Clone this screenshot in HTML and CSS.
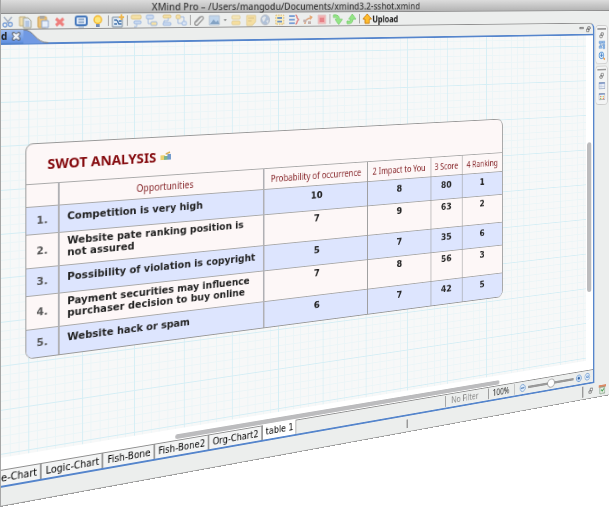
FILE: index.html
```html
<!DOCTYPE html>
<html lang="en">
<head>
  <meta charset="UTF-8">
  <title>XMind Pro</title>
  <link rel="stylesheet" href="styles.css">
</head>
<body>

<div class="stage">
<div class="window">
  <header class="titlebar">XMind Pro – /Users/mangodu/Documents/xmind3.2-sshot.xmind</header>

  <div class="toolbar">
    <div class="group loose">
      <button aria-label="Cut"><svg viewBox="0 0 14 14"><path d="M3 2l5 6M11 2L6 8" stroke="#a9b4c4" stroke-width="1.5"/><circle cx="4" cy="10" r="2" fill="none" stroke="#7fa3d8" stroke-width="1.3"/><circle cx="9.500" cy="9.500" r="2" fill="none" stroke="#7fa3d8" stroke-width="1.3"/></svg></button>
      <button aria-label="Copy"><svg viewBox="0 0 14 14"><path d="M1 2h6v9H1z" fill="#f1dfae" stroke="#c3b284"/><path d="M5 3h5l3 3v7H5z" fill="#dce6f4" stroke="#a9a78e"/><path d="M7 7h4M7 9h4M7 11h4" stroke="#8ba6d0"/></svg></button>
      <button aria-label="Paste"><svg viewBox="0 0 14 14"><rect x="2" y="2" width="9" height="11" rx="1" fill="#ecc277" stroke="#c99f59"/><rect x="4" y="1" width="5" height="3" fill="#aaa9a5"/><path d="M6 6h7v7H6z" fill="#e6eefa" stroke="#8ea5cc"/></svg></button>
      <button aria-label="Delete"><svg viewBox="0 0 14 14"><path d="M3 4l8 7M11 4l-8 7" stroke="#ee7f7c" stroke-width="3"/></svg></button>
    </div>
    <div class="group loose view">
      <button aria-label="Presentation"><svg viewBox="0 0 14 14"><rect x="1" y="2" width="12" height="9" rx="2" fill="#dfeaf8" stroke="#4477bb" stroke-width="2"/><path d="M4 5h6M4 8h6" stroke="#5579a6"/><path d="M4 13h6" stroke="#8fa6c4"/></svg></button>
      <button aria-label="Brainstorm"><svg viewBox="0 0 14 14"><circle cx="7" cy="5.500" r="4" fill="#ffe77a" stroke="#f3b62e" stroke-width="1.500"/><path d="M5 10h4v3H5z" fill="#728bb5"/></svg></button>
    </div>
    <i class="sep"></i>
    <div class="group">
      <button aria-label="New sheet"><svg viewBox="0 0 14 14"><path d="M1 3h11v10H1z" fill="#e2edf7" stroke="#7a8c9e"/><path d="M3 6h3M8 7h3M3 10h3M6 6l2 4h3" stroke="#3e6ea8" fill="none" stroke-width="1.500"/><path d="M11 0v6M8 3h6" stroke="#edb64e" stroke-width="2"/></svg></button>
    </div>
    <i class="sep"></i>
    <div class="group faded">
      <button aria-label="Topic"><svg viewBox="0 0 14 14"><rect x="1" y="1" width="11" height="4" rx="1" fill="#f7df9a" stroke="#dcc079"/><rect x="4" y="7" width="8" height="3" rx="1" fill="#c7d9f4" stroke="#92b0de"/><path d="M7 10v3h-3" fill="none" stroke="#92b0de"/></svg></button>
      <button aria-label="Subtopic"><svg viewBox="0 0 14 14"><rect x="1" y="1" width="8" height="4" rx="1" fill="#c7d9f4" stroke="#92b0de"/><rect x="6" y="8" width="7" height="4" rx="1" fill="#f7df9a" stroke="#92b0de"/><path d="M3 5v5h3" fill="none" stroke="#92b0de"/></svg></button>
      <button aria-label="Topic before"><svg viewBox="0 0 14 14"><rect x="3" y="1" width="9" height="3" rx="1" fill="#f7df9a" stroke="#dcc079"/><rect x="3" y="9" width="9" height="3" rx="1" fill="#c7d9f4" stroke="#92b0de"/><path d="M9 4v3H4v2" fill="none" stroke="#92b0de"/></svg></button>
      <button aria-label="Parent topic"><svg viewBox="0 0 14 14"><rect x="1" y="1" width="5" height="4" rx="1" fill="#f7df9a" stroke="#dcc079"/><rect x="8" y="8" width="5" height="4" rx="1" fill="#dbe6f7" stroke="#92b0de"/><path d="M3 5v5h5M6 3h4v5" fill="none" stroke="#92b0de"/></svg></button>
    </div>
    <i class="sep"></i>
    <div class="group loose faded">
      <button aria-label="Attachment"><svg viewBox="0 0 14 14"><path d="M3 9l6-6q3-1 3 2l-7 7q-4 1-3-3l6-6" fill="none" stroke="#8c8c8c" stroke-width="1.500"/></svg></button>
      <button aria-label="Image"><svg viewBox="0 0 14 14"><path d="M1 2h12v10H1z" fill="#b9d2ee" stroke="#a9b8ca"/><path d="M2 11l4-5 3 3 2-2 2 4z" fill="#7296bd"/></svg></button>
      <span class="caret"></span>
      <button aria-label="Label"><svg viewBox="0 0 14 14"><rect x="2" y="2" width="10" height="4" rx="1" fill="#f6e5b0" stroke="#e0cb8d"/><rect x="2" y="8" width="10" height="4" rx="1" fill="#f8dc91" stroke="#e0cb8d"/></svg></button>
      <button aria-label="Notes"><svg viewBox="0 0 14 14"><path d="M2 2h11v7l-4 4H2z" fill="#f6dc96" stroke="#dfc684"/><path d="M4 5h7M4 8h4" stroke="#d4ba76"/></svg></button>
      <button aria-label="Hyperlink"><svg viewBox="0 0 14 14"><circle cx="7" cy="7" r="5.500" fill="#a7bbd6" stroke="#b3b6bc"/><path d="M3 5q3-3 5-1l-2 4-2 1zM8 8l3-1-1 4z" fill="#e3e7eb"/></svg></button>
      <button aria-label="Boundary"><svg viewBox="0 0 14 14"><path d="M2 2h10v10H2z" fill="#fdeeb8" stroke="#d9a94a" stroke-dasharray="2 1"/><path d="M4 4h6v2H4zM4 8h6v2H4z" fill="#5480c0"/></svg></button>
      <button aria-label="Summary"><svg viewBox="0 0 14 14"><path d="M1 3h7M1 7h7M1 11h7" stroke="#6791d1" stroke-width="2"/><path d="M9 2q2 0 2 3l2 2-2 2q0 3-2 3" fill="none" stroke="#db6668" stroke-width="1.500"/></svg></button>
      <button aria-label="Relationship"><svg viewBox="0 0 14 14"><path d="M3 12q0-6 8-7" fill="none" stroke="#d98a55" stroke-width="1.500"/><path d="M9 2l4 2-3 4z" fill="#e39b5c"/><path d="M1 7h4v3H1zM7 9h4v3H7z" fill="#bda6a2"/></svg></button>
      <button aria-label="Marker"><svg viewBox="0 0 14 14"><path d="M2 2h10v10H2z" fill="#f3a9a9" stroke="#e3c3c3"/><path d="M4 5h6v5H4z" fill="#e57077"/></svg></button>
    </div>
    <i class="sep"></i>
    <div class="group loose">
      <button aria-label="Drill down"><svg viewBox="0 0 14 14"><path d="M1 2q8-1 8 5h4l-5 6-5-6h3q0-3-5-2z" fill="#93e685" stroke="#7fce75"/></svg></button>
      <button aria-label="Drill up"><svg viewBox="0 0 14 14"><path d="M1 12q8 1 8-5h4L8 1 3 7h3q0 3-5 2z" fill="#93e685" stroke="#7fce75"/></svg></button>
    </div>
    <i class="sep"></i>
    <button class="upload"><svg viewBox="0 0 14 14"><path d="M7 1l6 6h-3v5H4V7H1z" fill="#fdbb2c" stroke="#c77d13"/></svg>Upload</button>
  </div>

  <div class="workbench">
    <section class="editor">
      <div class="tabstrip">
        <div class="file-tab">
          <span>d</span>
          <button aria-label="Close"><svg viewBox="0 0 12 12"><path d="M1 1h3l2 2 2-2h3v3L9 6l2 2v3H8L6 9l-2 2H1V8l2-2-2-2z" fill="#eef3fa" stroke="#333"/></svg></button>
        </div>
        <svg class="curve" viewBox="0 0 30 14" preserveAspectRatio="none"><path d="M0 0C13 0 14 14 30 14H0z" fill="#7099e3"/><path d="M0 0C13 0 14 13.500 30 13.500" fill="none" stroke="#777"/></svg>
        <div class="strip-tools">
          <button aria-label="Minimize"><svg viewBox="0 0 8 8"><path d="M1 1.500h6v2H1z" fill="#fff" stroke="#555"/></svg></button>
          <button aria-label="Restore"><svg viewBox="0 0 8 8"><path d="M3 1h4v3H3zM1 4h4v3H1z" fill="#fff" stroke="#555"/></svg></button>
        </div>
      </div>

      <div class="canvas">
        <div class="paper">
          <div class="swot">
            <h1>SWOT ANALYSIS <svg viewBox="0 0 14 10"><path d="M1 4h5v5H1z" fill="#ecd070"/><path d="M5 5h4v4H5z" fill="#7fb38c"/><path d="M9 3h4v6H9z" fill="#729acb"/><path d="M7 3l5-2" stroke="#d8a94c" stroke-width="1.500"/></svg></h1>
            <table>
              <colgroup><col class="c-num"><col class="c-name"><col class="c-prob"><col class="c-impact"><col class="c-score"><col class="c-rank"></colgroup>
              <thead>
                <tr><th></th><th>Opportunities</th><th>Probability of occurrence</th><th>2 Impact to You</th><th>3 Score</th><th>4 Ranking</th></tr>
              </thead>
              <tbody>
                <tr><th>1.</th><td>Competition is very high</td><td>10</td><td>8</td><td>80</td><td>1</td></tr>
                <tr class="tall"><th>2.</th><td>Website pate ranking position is<br>not assured</td><td>7</td><td>9</td><td>63</td><td>2</td></tr>
                <tr><th>3.</th><td>Possibility of violation is copyright</td><td>5</td><td>7</td><td>35</td><td>6</td></tr>
                <tr class="tall"><th>4.</th><td>Payment securities may influence<br>purchaser decision to buy online</td><td>7</td><td>8</td><td>56</td><td>3</td></tr>
                <tr><th>5.</th><td>Website hack or spam</td><td>6</td><td>7</td><td>42</td><td>5</td></tr>
              </tbody>
            </table>
          </div>
        </div>
        <div class="vscroll"><div class="thumb"></div></div>
        <div class="hscroll"><div class="thumb"></div></div>
      </div>

      <div class="sheetbar">
        <nav class="sheets">
          <button>e-Chart</button>
          <button>Logic-Chart</button>
          <button>Fish-Bone</button>
          <button>Fish-Bone2</button>
          <button>Org-Chart2</button>
          <button class="active">table 1</button>
        </nav>
        <div class="sheet-status">
          <span class="filter">No Filter</span>
          <span class="percent">100%</span>
          <div class="zoom">
            <button aria-label="Zoom out"><svg viewBox="0 0 12 12"><circle cx="6" cy="6" r="4.500" fill="#e4effb" stroke="#5a8cc9"/><path d="M3 6h6" stroke="#3468ab" stroke-width="1.500"/></svg></button>
            <input type="range" min="0" max="100" value="49" aria-label="Zoom">
            <button aria-label="Zoom in"><svg viewBox="0 0 12 12"><circle cx="6" cy="6" r="4.500" fill="#d4e5f8" stroke="#5a8cc9"/><path d="M4 6h4M6 4v4" stroke="#2a5c9f" stroke-width="2"/></svg></button>
            <button aria-label="Fit"><svg viewBox="0 0 12 12"><circle cx="6" cy="6" r="4.500" fill="#e4effb" stroke="#5a8cc9"/><path d="M4 5h4v2H4z" fill="none" stroke="#5a8cc9"/></svg></button>
          </div>
        </div>
      </div>
    </section>

    <aside class="rail">
      <div class="rail-box">
        <i class="grip"></i>
        <button class="small" aria-label="Restore"><svg viewBox="0 0 8 8"><path d="M3 1h4v3H3zM1 4h4v3H1z" fill="#fff" stroke="#666"/></svg></button>
        <button aria-label="Outline"><svg viewBox="0 0 14 14"><path d="M1 1h6v3H1zM1 9h6v3H1zM8 1h5v3H8zM9 6h4v3H9zM9 10h4v3H9z" fill="#9dc3ee" stroke="#5f92cf"/><path d="M3 4v5M3 7h6" stroke="#3f78be"/></svg></button>
        <button aria-label="Overview"><svg viewBox="0 0 14 14"><circle cx="6" cy="6" r="5" fill="#d9eafa" stroke="#478bd2" stroke-width="1.500"/><path d="M6 3v6M3 6h6" stroke="#3f78be" stroke-width="1.500"/><path d="M10 10l3 3" stroke="#e58e35" stroke-width="2.500"/></svg></button>
      </div>
      <div class="rail-box">
        <i class="grip"></i>
        <button class="small" aria-label="Restore"><svg viewBox="0 0 8 8"><path d="M3 1h4v3H3zM1 4h4v3H1z" fill="#fff" stroke="#666"/></svg></button>
        <button aria-label="Properties"><svg viewBox="0 0 14 14"><path d="M1 2h12v10H1z" fill="#eef2fa" stroke="#7d8fae"/><path d="M1 3h12" stroke="#7590c4" stroke-width="2"/><path d="M5 4v8M1 8h12" stroke="#b8c4da"/></svg></button>
        <button aria-label="Markers"><svg viewBox="0 0 14 14"><path d="M1 2h12v10H1z" fill="#fff" stroke="#8a8fa0"/><path d="M1 3h12" stroke="#7590c4" stroke-width="2"/><path d="M3 6h2v2H3zM9 9h2v2H9z" fill="#dd5a3c"/><path d="M6 6h2v2H6zM3 9h2v2H3z" fill="#67b35c"/><path d="M9 6h2v2H9zM6 9h2v2H6z" fill="#eda93a"/></svg></button>
      </div>
    </aside>
  </div>

  <footer class="statusbar">
    <i class="notch"></i>
    <div class="tray">
      <button class="small" aria-label="Restore"><svg viewBox="0 0 8 8"><path d="M3 1h4v3H3zM1 4h4v3H1z" fill="#fff" stroke="#666"/></svg></button>
      <button aria-label="Task info"><svg viewBox="0 0 14 14"><path d="M1 2h12v3H1z" fill="#dc8a66"/><path d="M3 5h8v8H3z" fill="#eaf1e6" stroke="#7f9a82"/><path d="M5 8l2 2 3-3" fill="none" stroke="#3f9b4c" stroke-width="1.500"/></svg></button>
    </div>
  </footer>
</div>
</div>

</body>
</html>
```
FILE: styles.css
```css
* { box-sizing: border-box; }

body {
  margin: 0;
  background: #fff;
  font-family: "Noto Sans", "Open Sans", sans-serif;
  color: #222;
}

button {
  display: block;
  border: none;
  background: none;
  padding: 0;
  margin: 0;
  font: inherit;
  color: inherit;
}

button svg { display: block; width: 14px; height: 14px; }

.small svg { width: 8px; height: 8px; }

.stage {
  width: 100%;
  height: 100vh;
  overflow: hidden;
}

/* the whole app window, turned away from the viewer on its left edge */
.window {
  display: flex;
  flex-direction: column;
  width: 130.4vw;
  height: 100vh;
  background: #eceeed;
  border-left: 1px solid #a5a5a5;
  border-right: 1px solid #bbb;
  border-bottom: 1px solid #999;
  overflow: hidden;
  transform-origin: 0 0;
  transform: perspective(80vw) rotateY(10deg);
}

.titlebar {
  height: 14px;
  padding-left: 162px;
  background: linear-gradient(#dcdcdc, #b4b4b4);
  border-bottom: 1px solid #8c8c8c;
  font-size: 11px;
  font-weight: 500;
  line-height: 13px;
  white-space: nowrap;
  color: #3c3c3c;
}

/* toolbar */
.toolbar {
  display: flex;
  align-items: center;
  gap: 3px;
  height: 15px;
}

.group { display: flex; align-items: center; gap: 3px; }
.group.loose { gap: 4px; }
.group.view { margin: 0 1px 0 6px; }
.faded { opacity: 0.85; }
.toolbar .sep { width: 1px; height: 11px; background: #999; }
.caret {
  border: 2px solid transparent;
  border-top-color: #666;
  border-bottom: none;
}

.upload {
  display: flex;
  align-items: center;
  font-size: 10px;
  font-weight: bold;
  line-height: 14px;
}

/* editor */
.workbench { display: flex; flex: 1; min-height: 0; }

.editor {
  display: flex;
  flex-direction: column;
  flex: 1;
  min-width: 0;
  border-top: 1px solid #8f8f8f;
  border-right: 2px solid #5585cc;
  border-bottom: 2px solid #5585cc;
  border-radius: 0 8px 0 0;
}

.tabstrip {
  display: flex;
  height: 15px;
  border-bottom: 2px solid #5585cc;
}

.file-tab {
  display: flex;
  align-items: center;
  gap: 5px;
  padding-right: 3px;
  background: linear-gradient(#9fbef2, #5f8fe0);
  font-size: 10px;
  font-weight: bold;
  line-height: 13px;
}

.file-tab svg { width: 9px; height: 9px; }
.curve { width: 26px; height: 14px; }

.strip-tools {
  display: flex;
  align-items: center;
  gap: 3px;
  margin-left: auto;
  padding-right: 4px;
}

.strip-tools svg { width: 8px; height: 8px; }

.canvas {
  display: grid;
  flex: 1;
  min-height: 0;
  grid-template-columns: 1fr 12px;
  grid-template-rows: 1fr 12px;
  background: #fff;
}

.paper {
  padding: 100px 0 0 25px;
  background-color: #f7f8f8;
  background-image:
    linear-gradient(to right, #d5eef5 1px, transparent 1px),
    linear-gradient(#d5eef5 1px, transparent 1px),
    repeating-linear-gradient(to right, #ebf5f7 0 1px, transparent 1px 16.66%),
    repeating-linear-gradient(#ebf5f7 0 1px, transparent 1px 20%);
  background-size: 57px 44px;
  background-position: 28px 13px;
}

.vscroll { padding: 136px 3px 0 2px; }
.vscroll .thumb { height: 190px; }
.hscroll { padding: 6px 18% 0 25%; }
.hscroll .thumb { height: 5px; }
.thumb { border-radius: 4px; background: #bcbcbe; }

/* spreadsheet topic */
.swot {
  width: 82%;
  border: 1px solid #999;
  border-radius: 8px;
  background: #fdf7f7;
  overflow: hidden;
}

.swot h1 {
  display: flex;
  align-items: center;
  gap: 4px;
  height: 40px;
  margin: 0;
  padding-left: 22px;
  font-size: 15px;
  font-weight: bold;
  color: #84090d;
}

.swot h1 svg { width: 14px; height: 10px; }

table {
  width: 100%;
  table-layout: fixed;
  border-collapse: collapse;
  font-family: "DejaVu Sans", sans-serif;
  font-size: 11px;
}

.c-num { width: 34px; }
.c-name { width: 235px; }
.c-prob { width: 134px; }
.c-impact { width: 88px; }
.c-score { width: 45px; }

thead tr { height: 23px; }
tbody tr { height: 28px; }
tbody .tall { height: 34px; }
tbody tr:nth-child(odd) { background: #dde5fe; }

th, td {
  padding: 0;
  border-top: 1px solid #aaa;
  border-left: 1px solid #999;
  white-space: nowrap;
}

th:first-child { border-left: none; }
th:nth-child(2), td:nth-child(2),
th:nth-child(3), td:nth-child(3) {
  border-left: 2px solid #b0b0b4;
}

thead th {
  font-family: "Noto Sans", sans-serif;
  font-size: 10px;
  font-weight: normal;
  color: #86262a;
}

tbody th { color: #555; }

tbody td {
  padding-top: 3px;
  font-weight: bold;
  line-height: 16px;
  text-align: center;
  vertical-align: top;
}

tbody .tall td { padding-top: 1px; }

tbody td:nth-child(2),
tbody .tall td:nth-child(2) {
  padding: 0 0 4px 8px;
  line-height: 12px;
  text-align: left;
  vertical-align: middle;
}

/* sheet tabs and zoom */
.sheetbar {
  display: flex;
  justify-content: space-between;
  height: 16px;
  border-top: 1px solid #8f8f8f;
}

.sheets {
  display: flex;
  font-family: "DejaVu Sans", sans-serif;
  font-size: 10px;
  line-height: 14px;
  color: #000;
}

.sheets button {
  padding: 0 3px 0 4px;
  border-right: 2px solid #999;
  background: #f3f4f4;
}

.sheets button:first-child { padding-left: 0; }

.sheets .active {
  margin-top: -1px;
  border-right-width: 1px;
  background: #fff;
}

.sheet-status {
  display: flex;
  align-items: center;
  gap: 6px;
  padding-right: 4px;
  font-size: 10px;
  line-height: 13px;
}

.filter, .percent { border-left: 1px solid #999; }
.filter { padding: 0 8px; color: #888; }
.percent { padding: 0 8px 0 6px; border-right: 1px solid #999; }

.zoom { display: flex; align-items: center; gap: 3px; }
.zoom svg { width: 11px; height: 11px; }

.zoom input {
  appearance: none;
  width: 72px;
  height: 12px;
  margin: 0;
  background: linear-gradient(#999, #999) center / 100% 3px no-repeat;
}

.zoom input::-webkit-slider-thumb {
  appearance: none;
  width: 12px;
  height: 11px;
  border: 1px solid #999;
  border-radius: 50%;
  background: #fff;
}

/* fast views on the right */
.rail {
  display: flex;
  flex-direction: column;
  gap: 2px;
  width: 24px;
  padding: 3px 2px 0 2px;
}

.rail-box {
  display: flex;
  flex-direction: column;
  align-items: center;
  gap: 3px;
  padding: 3px 0 4px;
  border: 1px solid #c9c9c9;
  border-radius: 4px;
  background: #f3f4f4;
}

.rail .grip { width: 14px; height: 2px; background: #999; }
.rail svg { width: 11px; height: 11px; }
.rail .small svg { width: 8px; height: 8px; }

.statusbar {
  display: flex;
  align-items: center;
  justify-content: space-between;
  height: 18px;
  padding-left: 61%;
}

.notch { width: 2px; height: 10px; border: 1px solid #999; }

.tray {
  display: flex;
  align-items: center;
  gap: 8px;
  padding: 0 4px 0 8px;
  border-left: 2px solid #999;
}
```
